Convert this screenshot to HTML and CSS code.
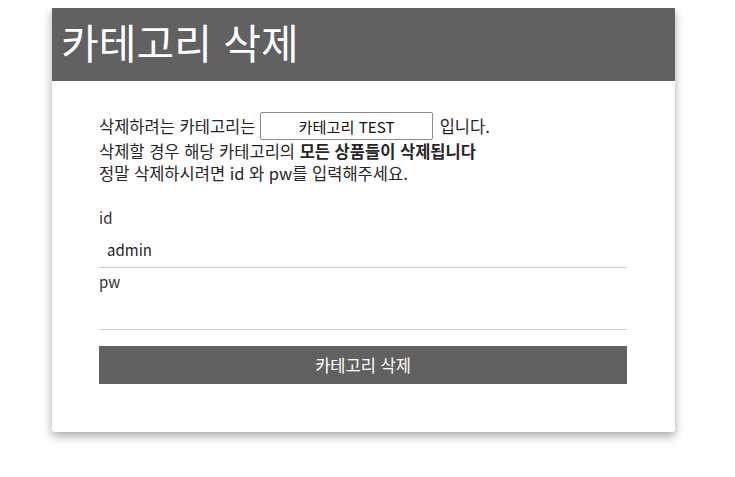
FILE: index.html
```html
<!DOCTYPE html>
<html lang="ko">
<head>
<meta charset="utf-8">
<link rel="stylesheet" href="styles.css">
</head>
<body>
<div class="card">
  <div class="card-head">카테고리 삭제</div>
  <div class="card-body">
    <div class="notice">
      <div class="line line-first">삭제하려는 카테고리는 <input class="cat-name" type="text" value="카테고리 TEST" readonly> 입니다.</div>
      <div class="line">삭제할 경우 해당 카테고리의 <b>모든 상품들이 삭제됩니다</b></div>
      <div class="line">정말 삭제하시려면 id 와 pw를 입력해주세요.</div>
    </div>
    <form class="form">
      <label class="label">id</label>
      <input class="field field-id" type="text" value="admin">
      <label class="label label-pw">pw</label>
      <input class="field field-pw" type="password" value="">
      <button class="btn" type="button">카테고리 삭제</button>
    </form>
  </div>
</div>
</body>
</html>
```
FILE: styles.css
```css
html {
  min-height: 100%;
  background: #fff;
}
body {
  margin: 8px;
  padding-bottom: 30px;
  font-family: "Noto Sans CJK KR", "Noto Sans", sans-serif;
  color: #262626;
}
.card {
  width: 623px;
  margin-left: 44px;
  background: #fff;
  box-shadow: 0 4px 10px rgba(0,0,0,0.35);
  border-radius: 0 0 3px 3px;
}
.card-head {
  background: #616161;
  color: #fff;
  height: 73px;
  line-height: 66px;
  padding-left: 9px;
  font-size: 41px;
}
.card-body {
  padding: 31px 48px 48px 47px;
}
.notice {
  font-size: 16.5px;
}
.line {
  line-height: 22px;
}
.line-first {
  height: 28px;
  line-height: 28px;
  display: flex;
  align-items: center;
  white-space: pre;
}
.cat-name {
  width: 173px;
  height: 28px;
  box-sizing: border-box;
  border: 1px solid #8a8a8a;
  border-radius: 2px;
  font-family: inherit;
  font-size: 15.2px;
  text-align: center;
  color: #111;
  padding: 0;
  margin: 0 2px 0 0;
}
.form {
  display: flex;
  flex-direction: column;
  margin-top: 23px;
}
.label {
  font-size: 15px;
  line-height: 22px;
  color: #333;
}
.field {
  box-sizing: border-box;
  border: none;
  border-bottom: 1px solid #cfcfcf;
  font-family: inherit;
  font-size: 15px;
  padding: 3px 8px 0;
  color: #222;
  outline: none;
}
.field-id {
  height: 39px;
}
.field-pw {
  height: 37px;
}
.label-pw {
  margin-top: 3px;
}
.btn {
  margin-top: 16px;
  height: 38px;
  border: none;
  background: #616161;
  color: #fff;
  font-family: inherit;
  font-size: 16.5px;
  padding: 0;
}
```
